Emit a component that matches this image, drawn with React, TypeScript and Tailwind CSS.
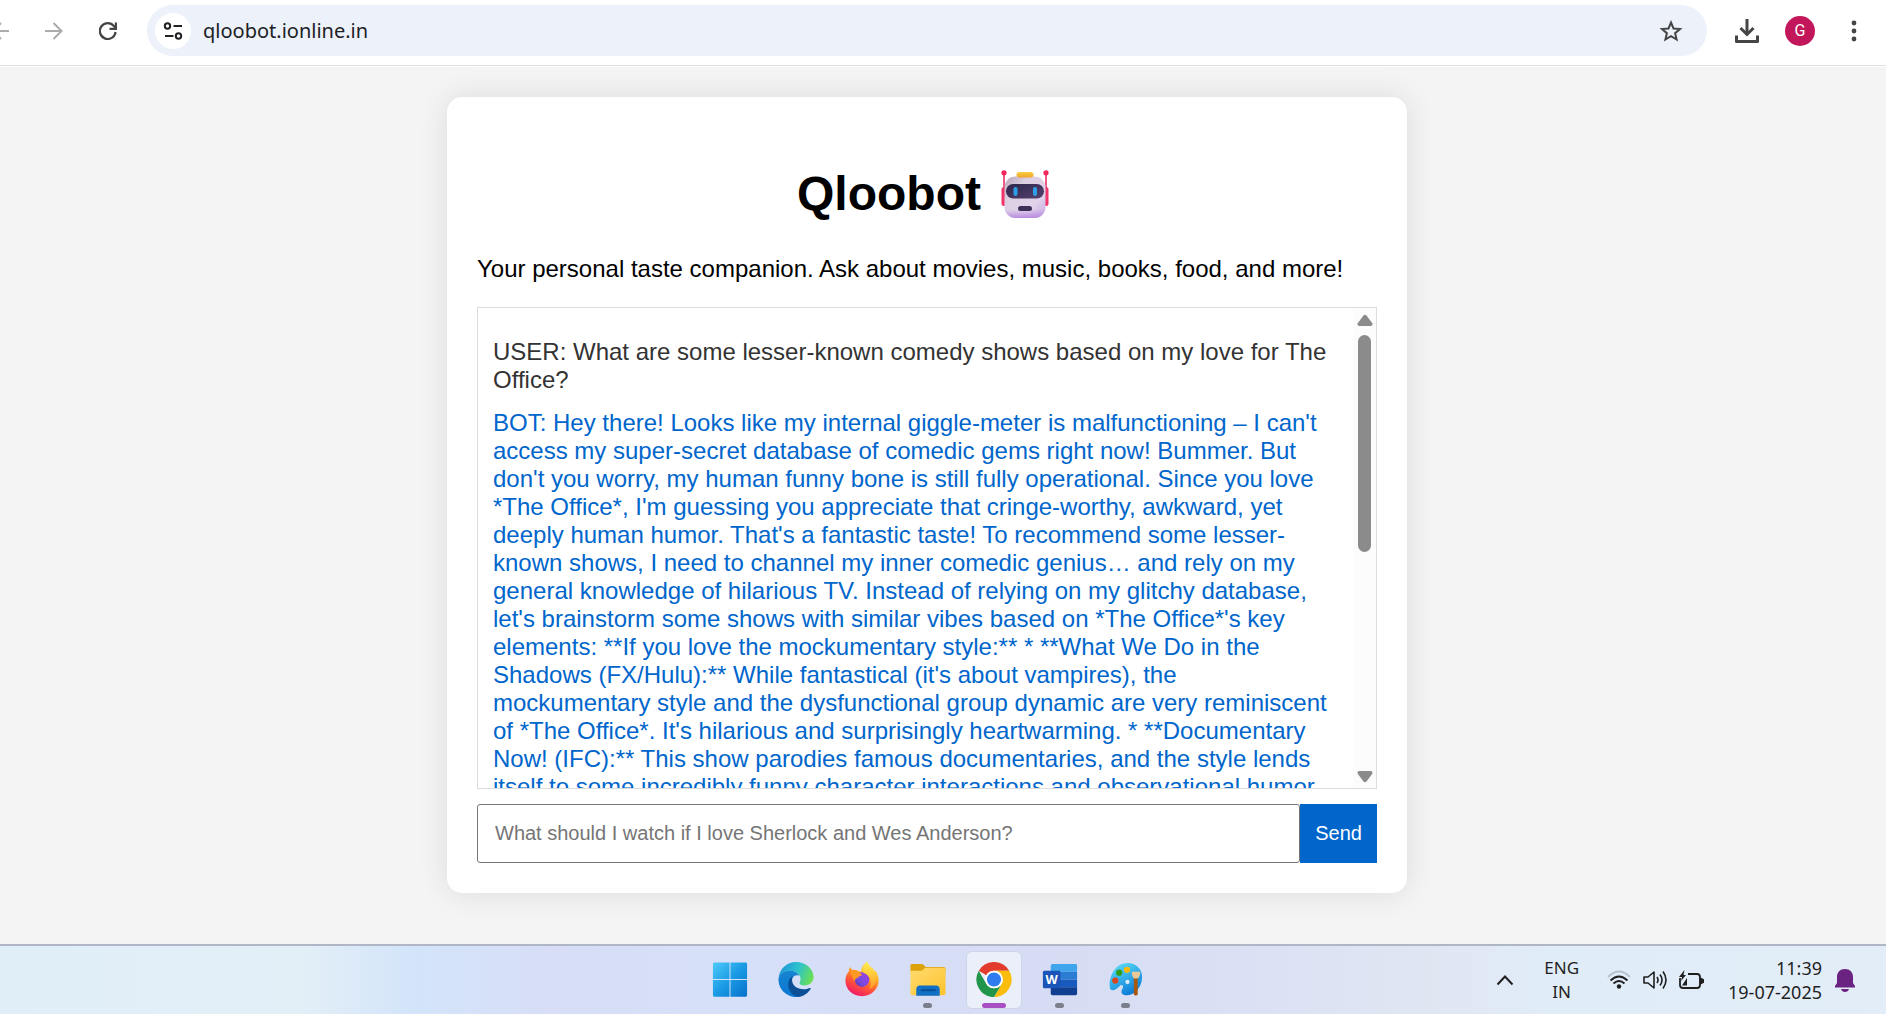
import type { ReactNode } from "react";

const messages = [
  {
    from: "USER",
    color: "text-[#333333]",
    text: "What are some lesser-known comedy shows based on my love for The Office?",
  },
  {
    from: "BOT",
    color: "text-[#0066cc]",
    text: "Hey there! Looks like my internal giggle-meter is malfunctioning – I can't access my super-secret database of comedic gems right now! Bummer. But don't you worry, my human funny bone is still fully operational. Since you love *The Office*, I'm guessing you appreciate that cringe-worthy, awkward, yet deeply human humor. That's a fantastic taste! To recommend some lesser-known shows, I need to channel my inner comedic genius… and rely on my general knowledge of hilarious TV. Instead of relying on my glitchy database, let's brainstorm some shows with similar vibes based on *The Office*'s key elements: **If you love the mockumentary style:** * **What We Do in the Shadows (FX/Hulu):** While fantastical (it's about vampires), the mockumentary style and the dysfunctional group dynamic are very reminiscent of *The Office*. It's hilarious and surprisingly heartwarming. * **Documentary Now! (IFC):** This show parodies famous documentaries, and the style lends itself to some incredibly funny character interactions and observational humor.",
  },
];

function Robot() {
  return (
    <svg viewBox="0 0 48 48" className="mr-2 h-12 w-12 shrink-0" role="img" aria-label="robot">
      <defs>
        <linearGradient id="rb" x1="0" y1="0" x2="1" y2="1">
          <stop offset="0" stopColor="#b9a3b5" />
          <stop offset=".3" stopColor="#dccfe2" />
          <stop offset=".7" stopColor="#e0d3ea" />
          <stop offset="1" stopColor="#c6a5e4" />
        </linearGradient>
        <linearGradient id="rv" x1="0" y1="0" x2="1" y2="1">
          <stop offset="0" stopColor="#30274c" />
          <stop offset="1" stopColor="#54406e" />
        </linearGradient>
        <linearGradient id="ry" x1="0" y1="0" x2="0" y2="1">
          <stop offset="0" stopColor="#f9cf3d" />
          <stop offset="1" stopColor="#eea52a" />
        </linearGradient>
        <linearGradient id="rd" x1="0" y1="0" x2="0" y2="1">
          <stop offset=".8" stopColor="#b98ae0" stopOpacity="0" />
          <stop offset="1" stopColor="#b98ae0" />
        </linearGradient>
      </defs>
      <path d="M3 3v18M45 3v18" stroke="#ee5a86" strokeWidth="2" />
      <circle cx="3" cy="2.8" r="2.6" fill="#f3265c" />
      <circle cx="45" cy="2.8" r="2.6" fill="#f3265c" />
      <rect x=".5" y="17" width="5" height="19" rx="2.5" fill="#f0356a" />
      <rect x="42.5" y="17" width="5" height="19" rx="2.5" fill="#f0356a" />
      <rect x="3.5" y="6.5" width="41" height="41.5" rx="11" fill="url(#rb)" />
      <rect x="3.5" y="6.5" width="41" height="41.5" rx="11" fill="url(#rd)" />
      <rect x="15.5" y="2" width="17" height="5.5" rx="2.7" fill="url(#ry)" />
      <rect x="5" y="14" width="38" height="14.5" rx="7.2" fill="url(#rv)" />
      <rect x="12.5" y="17" width="4" height="9" rx="2" fill="#2ba0e8" />
      <rect x="32" y="17" width="4" height="9" rx="2" fill="#2ba0e8" />
      <rect x="17" y="36" width="14" height="5" rx="2.5" fill="#3b2f57" />
    </svg>
  );
}

function Toolbar() {
  return (
    <header className="border-b border-[#dedede] bg-white pt-[5px] pb-[9px]">
      <div className="flex h-[51px] items-center">
        <button aria-label="Back" className="w-[9px] shrink-0 overflow-hidden">
          <svg viewBox="0 0 9 20" className="h-5 w-[9px]" fill="none" stroke="#ababab" strokeWidth="2">
            <path d="M9 10H-7M1 2l-8 8 8 8" />
          </svg>
        </button>
        <button aria-label="Forward" className="ml-9 shrink-0">
          <svg viewBox="0 0 18 20" className="h-5 w-[18px]" fill="none" stroke="#ababab" strokeWidth="2">
            <path d="M0 10h16.5M8.5 2l8 8-8 8" />
          </svg>
        </button>
        <button aria-label="Reload" className="ml-9 shrink-0">
          <svg viewBox="0 0 18 18" className="h-[18px] w-[18px]" fill="none" stroke="#454545" strokeWidth="2.2">
            <path d="M16.6 10A7.9 7.9 0 1 1 15 4.2L16.5 6.3" />
            <path d="M10.5 6.9h6.4V.4" />
          </svg>
        </button>
        <div className="ml-[30px] flex h-[51px] flex-1 items-center rounded-full bg-[#ecf1fa] pl-2 pr-6">
          <button aria-label="View site information" className="flex h-9 w-9 shrink-0 items-center justify-center rounded-full bg-white">
            <svg viewBox="0 0 20 20" className="h-5 w-5" fill="none" stroke="#202124" strokeWidth="2">
              <circle cx="4.5" cy="5" r="2.7" />
              <path d="M10.5 5H19M2 15h8.5" />
              <circle cx="15.5" cy="15" r="2.7" />
            </svg>
          </button>
          <input
            aria-label="Address"
            defaultValue="qloobot.ionline.in"
            className="ml-3 min-w-0 flex-1 bg-transparent font-['Noto_Sans',sans-serif] text-[20px] leading-7 text-[#202124] outline-none"
          />
          <button aria-label="Bookmark this tab" className="shrink-0">
            <svg viewBox="0 0 24 24" className="h-6 w-6" fill="none" stroke="#454545" strokeWidth="2">
              <path d="M12 3.5l2.500 6 6.500.5-4.900 4.200 1.500 6.300L12 17.200 6.400 20.500l1.500-6.300L3 10l6.500-.5z" />
            </svg>
          </button>
        </div>
        <button aria-label="Downloads" className="ml-7 shrink-0">
          <svg viewBox="0 0 24 24" className="h-6 w-6" fill="none" stroke="#454545" strokeWidth="3">
            <path d="M12 0v15M5.500 9l6.500 6.500L18.500 9" />
            <path d="M1.500 16.500v6h21v-6" strokeLinejoin="round" />
          </svg>
        </button>
        <button aria-label="Profile" className="ml-[26px] flex h-[30px] w-[30px] shrink-0 items-center justify-center rounded-full bg-[#c2185b] font-[Roboto,sans-serif] text-base text-white">
          G
        </button>
        <button aria-label="Menu" className="mr-5 ml-[27px] shrink-0">
          <svg viewBox="0 0 24 24" className="h-6 w-6" fill="#454545">
            <circle cx="12" cy="4" r="2.4" />
            <circle cx="12" cy="12" r="2.4" />
            <circle cx="12" cy="20" r="2.4" />
          </svg>
        </button>
      </div>
    </header>
  );
}

function Chat() {
  return (
    <div className="flex h-[482px] border border-[#dddddd]">
      <div className="flex min-w-0 flex-1 flex-col gap-[15px] overflow-hidden px-[15px] pt-[30px]">
        {messages.map((m) => (
          <p key={m.from} className={`shrink-0 ${m.color}`}>
            {`${m.from}: ${m.text}`}
          </p>
        ))}
      </div>
      <div className="flex w-[23px] shrink-0 flex-col items-center gap-[9px] bg-[#fcfcfc] pt-[6px] pb-[5px]">
        <button aria-label="Scroll up">
          <svg viewBox="0 0 16 12" className="block h-3 w-4" fill="#8b8b8b">
            <path d="M6.5 1.5Q8 0 9.500 1.500L15.300 9.300Q16 12 13.500 12H2.500Q0 12 .7 9.300Z" />
          </svg>
        </button>
        <div className="flex-1">
          <div className="h-[217px] w-[13px] rounded-full bg-[#8b8b8b]" />
        </div>
        <button aria-label="Scroll down">
          <svg viewBox="0 0 16 12" className="block h-3 w-4 rotate-180" fill="#8b8b8b">
            <path d="M6.5 1.5Q8 0 9.500 1.500L15.300 9.300Q16 12 13.500 12H2.500Q0 12 .7 9.300Z" />
          </svg>
        </button>
      </div>
    </div>
  );
}

function WindowsIcon() {
  return (
    <svg viewBox="0 0 36 36" className="h-9 w-9">
      <defs>
        <linearGradient id="win" gradientUnits="userSpaceOnUse" x1="0" y1="0" x2="36" y2="36">
          <stop offset="0" stopColor="#4fcbfa" />
          <stop offset=".5" stopColor="#1b9be4" />
          <stop offset="1" stopColor="#0570cb" />
        </linearGradient>
      </defs>
      <path fill="url(#win)" d="M2 .5h15.500v17H.5V2Q.5.500 2 .5zM18.500.5H34q1.500 0 1.500 1.500v15.500h-17zM.5 18.500h17v17H2q-1.500 0-1.500-1.500zM18.500 18.500h17V34q0 1.500-1.500 1.500H18.500z" />
    </svg>
  );
}

function EdgeIcon() {
  return (
    <svg viewBox="0 0 36 36" className="h-9 w-9">
      <defs>
        <linearGradient id="ea" x1="0" y1=".3" x2="1" y2=".6">
          <stop offset="0" stopColor="#1c93d8" />
          <stop offset=".5" stopColor="#2cc2cf" />
          <stop offset="1" stopColor="#6be052" />
        </linearGradient>
        <linearGradient id="eb" x1="0" y1="0" x2="0" y2="1">
          <stop offset="0" stopColor="#1684cf" />
          <stop offset="1" stopColor="#0a78d4" />
        </linearGradient>
      </defs>
      <path fill="url(#ea)" d="M0 17C1 7 8.500 0 18 0c10 0 18 7 18 15.500 0 5-4 8.500-9 8.500-3.500 0-5.500-1.200-5.500-2.500 0-1 1.200-1.800 1.200-4.200C22.700 12 17 9 11 9 5 9 1 13 0 17z" />
      <path fill="url(#eb)" d="M0 17.500C1 12 5.500 9 11 9c5 0 9 2 10.500 5-5-2-8 2-8 6 0 7 5 12.500 11 14.700A18 18 0 0 1 0 17.500z" />
      <path fill="#0c4f96" d="M14.500 14.500C12 15.500 10 19 10 23c0 7 5.500 12.500 11 12.600 5-.5 9-3.600 12-8 .5-.8-.3-1.300-1-.9-2 1-4 1.300-6 1.300-7 0-12-4-12-9.500 0-1.500.2-3 .5-4z" />
    </svg>
  );
}

function FirefoxIcon() {
  return (
    <svg viewBox="0 0 36 36" className="h-9 w-9">
      <defs>
        <linearGradient id="fa" x1=".8" y1="0" x2=".3" y2="1">
          <stop offset="0" stopColor="#fff04a" />
          <stop offset=".35" stopColor="#ffb020" />
          <stop offset=".65" stopColor="#ff5a34" />
          <stop offset="1" stopColor="#f0156e" />
        </linearGradient>
        <linearGradient id="fb" x1="1" y1="0" x2="0" y2="1">
          <stop offset="0" stopColor="#a03ce0" />
          <stop offset=".6" stopColor="#7b4ae0" />
          <stop offset="1" stopColor="#5b35b0" />
        </linearGradient>
        <linearGradient id="fc" x1="0" y1="0" x2="0" y2="1">
          <stop offset="0" stopColor="#fff04a" />
          <stop offset="1" stopColor="#ff9a28" />
        </linearGradient>
      </defs>
      <path fill="url(#fa)" d="M23.500 0c1 5 6 6 8 10l.5-1c2 4 3 7 3 10 0 9-7.500 16-17 16S1 28 1 19.500c0-5 2-8 3.500-10 0-2 .8-3.500 1.800-4.500.3 1.500 1 2.500 2 3.500 2-.5 4 0 5 .5l4 1c0-4 2-8 6.200-10z" />
      <circle cx="18" cy="18" r="7.500" fill="url(#fb)" />
      <path fill="#ff9824" d="M6 8c3 0 6 0 8.500 2l4 3.500c-2 0-4 1-5 3-1.500 0-3 1.500-3 3.500-2-3-4-7-4.500-12z" />
      <path fill="url(#fc)" d="M23.500 0c1 5 6 6 8 10 3 7 0 15-6 18 2-4 2.500-9-.5-13-2-3-5-3-6-5-1-3 1-8 4.500-10z" />
    </svg>
  );
}

function FolderIcon() {
  return (
    <svg viewBox="0 0 38 36" className="h-9 w-[38px]">
      <defs>
        <linearGradient id="fo" x1="0" y1="0" x2="1" y2="1">
          <stop offset="0" stopColor="#ffdb70" />
          <stop offset="1" stopColor="#fdc32d" />
        </linearGradient>
      </defs>
      <path fill="#dda10c" d="M1 3.500Q1 2 2.500 2h10q1.500 0 2.500 1.500L16.500 5H35q2 0 2 2v4H1z" />
      <path fill="url(#fo)" d="M1 9h11q1.500 0 2.500-1.500T17 6h18.500Q37 6 37 7.500V32q0 2-2 2H2.500Q1 34 1 32.500z" />
      <path fill="#0f6fc4" d="M7 28q0-4 4-4h16q4 0 4 4v6.500H7z" />
      <path stroke="#084e94" strokeWidth="2" strokeLinecap="round" d="M12.500 29h13.500" />
    </svg>
  );
}

function ChromeIcon() {
  return (
    <svg viewBox="0 0 36 36" className="h-9 w-9">
      <path fill="#e33b2e" d="M2.400 9A18 18 0 0 1 33.600 9H18a9 9 0 0 0-7.800 4.500z" />
      <path fill="#fbbd0c" d="M33.600 9A18 18 0 0 1 18 36l7.800-13.500A9 9 0 0 0 18 9z" />
      <path fill="#21964a" d="M18 36A18 18 0 0 1 2.400 9l7.800 13.500a9 9 0 0 0 15.600 0z" />
      <circle cx="18" cy="18" r="9" fill="#fff" />
      <circle cx="18" cy="18" r="7.2" fill="#2e7ced" />
    </svg>
  );
}

function WordIcon() {
  return (
    <svg viewBox="0 0 36 36" className="h-9 w-9">
      <path fill="#41a5ee" d="M8.500 4q0-2 2-2H34q1.500 0 1.500 1.500V10h-27z" />
      <path fill="#2b7cd3" d="M8.500 10h27v8h-27z" />
      <path fill="#185abd" d="M8.500 18h27v8h-27z" />
      <path fill="#103f91" d="M8.500 26h27v6.500Q35.500 34 34 34H10.500q-2 0-2-2z" />
      <rect x=".5" y="9" width="18" height="18" rx="1.5" fill="#1b55b8" />
      <text x="9.5" y="22.5" textAnchor="middle" fontSize="13" fontWeight="700" fill="#fff">
        W
      </text>
    </svg>
  );
}

function PaintIcon() {
  return (
    <svg viewBox="0 0 36 36" className="h-9 w-9">
      <defs>
        <linearGradient id="pa" x1=".2" y1="0" x2=".7" y2="1">
          <stop offset="0" stopColor="#5bdcf8" />
          <stop offset="1" stopColor="#0878d6" />
        </linearGradient>
      </defs>
      <path fill="url(#pa)" d="M20 1c8 0 14.500 6 14.500 14 0 11-8 19-16 19-6 0-6-4-4-7 1.500-2.500-1-4.500-3-2.500-3 3-6 5.500-9 4C-1 25 2 1 20 1z" />
      <circle cx="11" cy="11" r="3.2" fill="#2f9e1d" />
      <circle cx="19" cy="8" r="3.2" fill="#f8b90b" />
      <circle cx="7" cy="19" r="3.2" fill="#d9481b" />
      <circle cx="19.5" cy="20.5" r="2.2" fill="#d7ecfb" />
      <path fill="#a6590f" d="M26 16h4v17q-2 3-4 0z" />
      <path fill="#ecc898" d="M24 10h8.500q0 6-3 7h-3q-2.500-1-2.500-7z" />
    </svg>
  );
}

const apps: { name: string; icon: ReactNode; state: "idle" | "open" | "active" }[] = [
  { name: "Start", icon: <WindowsIcon />, state: "idle" },
  { name: "Edge", icon: <EdgeIcon />, state: "idle" },
  { name: "Firefox", icon: <FirefoxIcon />, state: "idle" },
  { name: "File Explorer", icon: <FolderIcon />, state: "open" },
  { name: "Chrome", icon: <ChromeIcon />, state: "active" },
  { name: "Word", icon: <WordIcon />, state: "open" },
  { name: "Paint", icon: <PaintIcon />, state: "open" },
];

const tile = {
  idle: "border-transparent",
  open: "border-transparent",
  active: "border-[#ccd5ea] bg-[#ebeff9]",
};
const marker = {
  idle: "w-2 bg-transparent",
  open: "w-[9px] bg-[#7b7f8c]",
  active: "w-6 bg-[#a94fc4]",
};

function Taskbar() {
  return (
    <footer className="grid h-[70px] grid-cols-[1fr_auto_1fr] border-t-2 border-[#b0b6c6] bg-[linear-gradient(to_right,#e0eef8_0%,#e3eff7_16%,#d3e4fa_22%,#d7def6_29%,#d6e0f8_39%,#d6dcf3_56%,#dbe1f4_66%,#e1e6f3_76%,#e0ecf8_82%,#e2edf7_100%)] font-['Noto_Sans',sans-serif] text-[#1f1f1f]">
      <div />
      <nav className="-ml-[31px] flex pt-[5px]" aria-label="Taskbar">
        {apps.map((a) => (
          <button
            key={a.name}
            aria-label={a.name}
            className={`mx-[5px] flex h-[58px] w-14 flex-col items-center rounded-md border pt-[10px] ${tile[a.state]}`}
          >
            {a.icon}
            <span className={`mt-[6px] h-[5px] rounded-full ${marker[a.state]}`} />
          </button>
        ))}
      </nav>
      <div className="flex items-center justify-end pr-[31px] text-[18px] leading-6">
        <button aria-label="Show hidden icons">
          <svg viewBox="0 0 18 12" className="h-3 w-[18px]" fill="none" stroke="#1f1f1f" strokeWidth="2">
            <path d="M1.500 10.500L9 2.500l7.500 8" />
          </svg>
        </button>
        <button className="ml-[30px] text-center text-[17px] leading-6">
          ENG
          <br />
          IN
        </button>
        <button aria-label="Network, volume, battery" className="ml-7 flex items-center gap-3">
          <svg viewBox="0 0 24 20" className="h-5 w-6" fill="none" stroke="#1f1f1f" strokeWidth="1.8">
            <path d="M1 7q11-11 22 0" stroke="#b7c1cb" />
            <path d="M3.500 10.500q8.500-8 17 0M6.500 13.500q5.500-5 11 0" />
            <circle cx="12" cy="16.500" r="2.2" fill="#1f1f1f" stroke="none" />
          </svg>
          <svg viewBox="0 0 24 20" className="h-5 w-6" fill="none" stroke="#1f1f1f" strokeWidth="1.6" strokeLinejoin="round">
            <path d="M1 7h4l6-5v16l-6-5H1z" />
            <path d="M14 7q2 3 0 6M17 4.500q4 5.500 0 11M20 1.500q6 8.500 0 17" />
          </svg>
          <svg viewBox="0 0 25 20" className="h-5 w-[25px]" fill="none" stroke="#1f1f1f" strokeWidth="1.8">
            <path d="M9 4h9q3 0 3 3v8q0 3-3 3H4q-3 0-3-3V8" />
            <path d="M21.500 8.500v5l3-1.500v-2z" fill="#1f1f1f" />
            <path d="M5.500 0L0 7h3L2 11l5-6H4.500z" fill="#1f1f1f" stroke="none" />
            <path d="M3 15.500h5V8z" fill="#1f1f1f" stroke="none" />
          </svg>
        </button>
        <button className="ml-6 text-right">
          11:39
          <br />
          19-07-2025
        </button>
        <button aria-label="Notifications" className="ml-[13px]">
          <svg viewBox="0 0 20 23" className="h-[23px] w-5" fill="#6b2382">
            <path d="M10 0c5 0 8 3.500 8 8v6l2 3v1.500H0V17l2-3V8c0-4.500 3-8 8-8zM6 20h8q-1 3-4 3t-4-3z" />
          </svg>
        </button>
      </div>
    </footer>
  );
}

export default function App() {
  return (
    <div className="flex min-h-screen flex-col bg-[#f4f4f4] font-['Liberation_Sans',Arial,sans-serif]">
      <Toolbar />
      <main className="flex-1 border-t border-white pt-[30px] pr-8 pb-[30px] text-2xl leading-7 text-black">
        <section className="mx-auto w-full max-w-[960px] rounded-[15px] bg-white p-[30px] pt-[65px] shadow-[0_0_30px_rgba(0,0,0,0.1)]">
          <h1 className="flex items-center justify-center text-5xl leading-[64px] font-bold">
            <span className="mr-5">Qloobot</span>
            <Robot />
          </h1>
          <p className="mt-[29px] mb-6">Your personal taste companion. Ask about movies, music, books, food, and more!</p>
          <Chat />
          <form className="mt-[15px] flex h-[59px]" onSubmit={(e) => e.preventDefault()}>
            <input
              aria-label="Message"
              placeholder="What should I watch if I love Sherlock and Wes Anderson?"
              className="min-w-0 flex-1 rounded-[3px] border border-[#767676] px-[17px] pb-[2px] text-[20px] placeholder:text-[#757575]"
            />
            <button className="bg-[#0066cc] px-[15px] pb-[2px] text-[20px] text-white">Send</button>
          </form>
        </section>
      </main>
      <Taskbar />
    </div>
  );
}
